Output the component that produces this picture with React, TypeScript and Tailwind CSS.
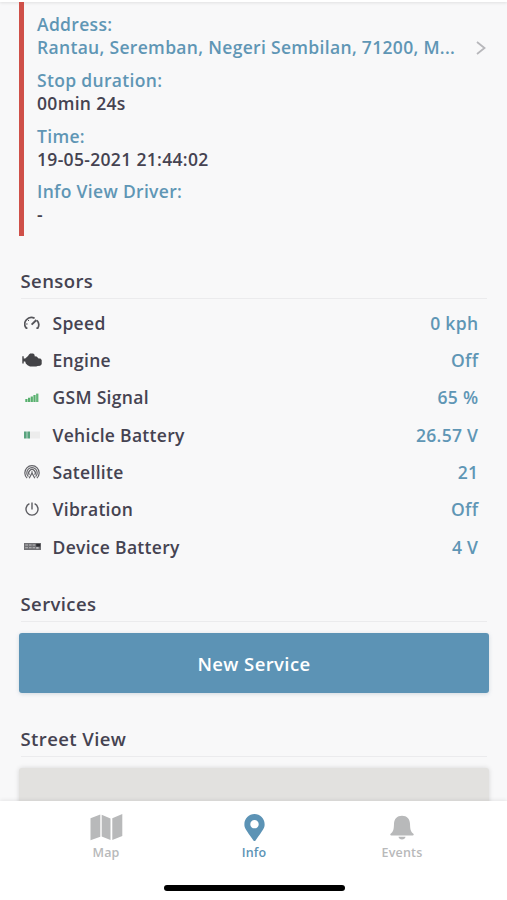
import type { ReactNode } from "react";
import { FaMapMarkerAlt } from "react-icons/fa";

type Sensor = { name: string; value: string; icon: ReactNode };

function SpeedIcon() {
  return (
    <svg width="16" height="14" viewBox="0 0 16 14" fill="none" stroke="#55555a" strokeWidth="1.7">
      <path d="M3.4 12.1H2.2A6.6 6.6 0 0 1 10.6 2.3M12.9 4.3a6.6 6.6 0 0 1 .9 7.8h-1.4" />
      <path d="M7.6 8.6 12.4 4" strokeWidth="2" />
      <path d="M2 8h1.6M4 4l1 1" strokeWidth="1" />
    </svg>
  );
}

function EngineIcon() {
  return (
    <svg width="20" height="14" viewBox="0 0 20 14" fill="#434347">
      <path d="M.3 3.2h1.4v2.2h1.5L6 3l1-1.4L8.2.6h3l1.4 1.2v1.4l2 .4 2 1.9 1.8.1 1.3 1.4v4.2l-1.5 1.6-2.6.2-1.4.5H8l-2.4-1.3-1.8-1.8-.6-1.8H1.7v2H.3z" />
    </svg>
  );
}

function GsmIcon() {
  return (
    <svg className="-ml-px" width="14" height="9" viewBox="0 0 14 9">
      <path fill="#58b06e" d="M.3 6h2.2v3H.3zM3 4.7h2.2V9H3zM5.7 3.4h2.2V9H5.7zM8.4 1.9h2.2V9H8.4z" />
      <path fill="#64b679" d="M11.1.6h2.3V9h-2.3z" />
    </svg>
  );
}

function BatteryIcon() {
  return (
    <svg width="16" height="8" viewBox="0 0 16 8">
      <path fill="#ececec" d="M6 .5h10v7H6z" />
      <path fill="#58a37e" d="M0 .5h2.7v7H0zM3.3.5H6v7H3.3z" />
    </svg>
  );
}

function SatelliteIcon() {
  return (
    <svg width="16" height="14" viewBox="0 0 16 14" fill="none" stroke="#626267" strokeWidth="1.2">
      <path d="M3.1 13.1a7.2 7.2 0 1 1 9.8 0" />
      <path d="M4.4 11.6a5.2 5.2 0 1 1 7.2 0" />
      <path d="M5.3 9.8a3.3 3.3 0 1 1 5.4 0" />
      <path d="M5.2 13.2 8 8l2.8 5.2M8 6.2v2" />
    </svg>
  );
}

function VibrationIcon() {
  return (
    <svg width="14" height="14" viewBox="0 0 14 14" fill="none" stroke="#5c5c61" strokeWidth="1.4">
      <path d="M4.4 1.7a6 6 0 1 0 5.2 0M7 .4v7" />
    </svg>
  );
}

function DeviceBatteryIcon() {
  return (
    <svg width="17" height="7" viewBox="0 0 17 7">
      <path fill="#707074" d="M0 0h17v7H0z" />
      <path fill="#bcbcbe" d="M1.2 1.4H4v1H1.2zM5 1.4h2.6v1H5zM8.6 1.4h2.6v1H8.6zM1.2 4.3H4v1H1.2zM5 4.3h2.6v1H5zM8.6 4.3h2.6v1H8.6zM12.2 4h2.4v1.8h-2.4z" />
      <path fill="#2d2d31" d="M12.2.8h4v2.8h-4z" />
    </svg>
  );
}

const details = [
  { label: "Stop duration:", value: "00min 24s" },
  { label: "Time:", value: "19-05-2021 21:44:02" },
  { label: "Info View Driver:", value: "-" },
];

const sensors: Sensor[] = [
  { name: "Speed", value: "0 kph", icon: <SpeedIcon /> },
  { name: "Engine", value: "Off", icon: <EngineIcon /> },
  { name: "GSM Signal", value: "65 %", icon: <GsmIcon /> },
  { name: "Vehicle Battery", value: "26.57 V", icon: <BatteryIcon /> },
  { name: "Satellite", value: "21", icon: <SatelliteIcon /> },
  { name: "Vibration", value: "Off", icon: <VibrationIcon /> },
  { name: "Device Battery", value: "4 V", icon: <DeviceBatteryIcon /> },
];

function SectionTitle({ children }: { children: ReactNode }) {
  return (
    <h2 className="mr-0.5 ml-[1.5px] h-[31px] border-b border-[#ebebed] text-[18.5px] leading-[26px] tracking-[0.4px]">
      {children}
    </h2>
  );
}

export default function App() {
  return (
    <div className="flex h-[900px] w-[507px] flex-col overflow-hidden bg-[#f8f8f9] font-['Open_Sans',sans-serif] font-semibold text-[#454351]">
      <div className="h-[2px] shrink-0 bg-white shadow-[0_1px_3px_rgba(0,0,0,0.12)]" />

      <main className="min-h-0 flex-1 overflow-hidden pr-[18px] pl-[19px]">
        <section className="h-[234px] border-l-[5px] border-[#cf5049] pt-[11.3px] pl-[13px] text-[17.5px] leading-[23px] tracking-[0.32px]">
          <div className="mb-[9.67px] text-[#5f96b5]">
            <div>Address:</div>
            <div className="flex items-center justify-between">
              <span className="whitespace-nowrap">Rantau, Seremban, Negeri Sembilan, 71200, M...</span>
              <svg className="mr-[3px]" width="10" height="14" viewBox="0 0 10 14" fill="none" stroke="#b7b7bb" strokeWidth="1.8">
                <path d="m1 1 7.5 6L1 13" />
              </svg>
            </div>
          </div>
          {details.map((item) => (
            <div key={item.label} className="mb-[9.67px]">
              <div className="text-[#5f96b5]">{item.label}</div>
              <div>{item.value}</div>
            </div>
          ))}
        </section>

        <section className="mt-8">
          <SectionTitle>Sensors</SectionTitle>
          <ul className="mt-[5px] text-[17.5px] tracking-[0.3px]">
            {sensors.map((sensor) => (
              <li key={sensor.name} className="flex h-[37.33px] items-center pr-[10.7px]">
                <span className="flex w-[26px] justify-center">{sensor.icon}</span>
                <span className="ml-[7.5px]">{sensor.name}</span>
                <span className="ml-auto text-[#5f96b5]">{sensor.value}</span>
              </li>
            ))}
          </ul>
        </section>

        <section className="mt-[26px]">
          <SectionTitle>Services</SectionTitle>
          <button className="mt-[11px] h-[60px] w-full rounded-[3px] bg-[#5c93b5] pt-0.5 text-[18.5px] tracking-[0.4px] text-white shadow-[0_1px_4px_rgba(60,100,130,0.2)]">
            New Service
          </button>
        </section>

        <section className="mt-[33px]">
          <SectionTitle>Street View</SectionTitle>
          <div className="mt-[11px] h-[60px] rounded-[3px] bg-[#e2e1df] shadow-[0_0_5px_rgba(0,0,0,0.14)]" />
        </section>
      </main>

      <nav className="relative flex h-[99px] shrink-0 flex-col items-center bg-white shadow-[0_-1px_4px_rgba(0,0,0,0.08)]">
        <div className="ml-px grid h-[83.5px] w-[444px] grid-cols-3 pt-3 text-[12.5px] leading-[18px] tracking-[0.2px] text-[#b8b9ba]">
          <a className="flex flex-col items-center">
            <svg className="mb-[3px]" width="33" height="28" viewBox="0 0 33 28" fill="#b8b9ba">
              <path d="M.5 5.2 10.3 1.6v22.2L.5 27.2zM11.7 1.8l8.8 3.8v21.4l-8.8-3.4zM22.3 5.2 32.3 1v22l-10 4z" />
            </svg>
            Map
          </a>
          <a className="flex flex-col items-center text-[#5c93b5]">
            <FaMapMarkerAlt className="mt-[1px] mb-[3px] h-[27px] w-[21px]" />
            Info
          </a>
          <a className="flex flex-col items-center">
            <svg className="mt-[2px] mb-[3px]" width="24" height="26" viewBox="0 0 24 26" fill="#b8b9ba">
              <path d="M12 .8c5 0 7.8 3 8 8 .2 6.5.8 7.7 3.4 10 .6.7.4 1.7-.7 1.7H1.3C.2 20.5 0 19.5.6 18.8 3.2 16.5 3.8 15.3 4 8.8c.2-5 3-8 8-8z" />
              <path d="M8.5 21.8h7c-.4 1.7-1.6 2.8-3.5 2.8s-3.1-1.1-3.5-2.8z" />
            </svg>
            Events
          </a>
        </div>
        <div className="ml-px h-1.5 w-[181px] rounded-full bg-black" />
      </nav>
    </div>
  );
}
